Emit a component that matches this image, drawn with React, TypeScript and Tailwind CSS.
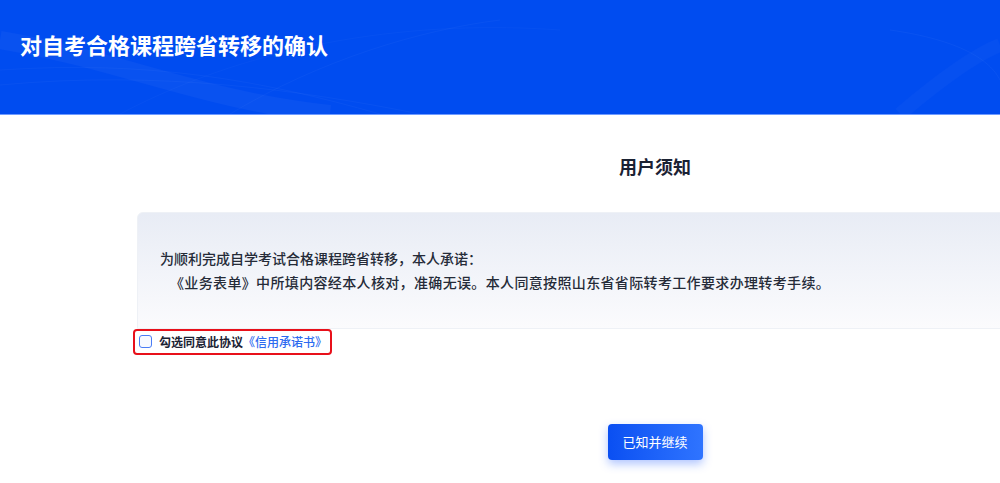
import React, { useState } from "react";

const cjk = "font-['PingFang_SC','Noto_Sans_CJK_SC','Noto_Sans',sans-serif]";

// 头部背景的波浪线装饰
const HeaderWaves: React.FC = () => (
  <svg
    className="absolute inset-0 h-full w-full"
    viewBox="0 0 1000 114"
    preserveAspectRatio="none"
    fill="none"
  >
    <path d="M0 40 C120 60 200 100 330 114" stroke="#ffffff" strokeOpacity="0.035" strokeWidth="18" />
    <path d="M0 70 C150 60 260 80 380 114" stroke="#ffffff" strokeOpacity="0.03" strokeWidth="1" />
    <path d="M0 85 C160 70 300 90 420 114" stroke="#ffffff" strokeOpacity="0.03" strokeWidth="1" />
    <path d="M120 114 C260 40 420 20 560 30" stroke="#ffffff" strokeOpacity="0.025" strokeWidth="1" />
    <path d="M230 114 C320 60 420 30 500 20" stroke="#ffffff" strokeOpacity="0.03" strokeWidth="1" />
    <path d="M890 30 C960 40 990 60 1000 80" stroke="#ffffff" strokeOpacity="0.035" strokeWidth="1" />
    <path d="M900 114 C940 80 975 55 1000 45" stroke="#ffffff" strokeOpacity="0.025" strokeWidth="14" />
  </svg>
);

const App: React.FC = () => {
  const [agreed, setAgreed] = useState(false);

  return (
    <div className={`h-[483px] w-[1000px] overflow-hidden bg-white ${cjk}`}>
      {/* 顶部标题栏 */}
      <div className="relative h-[115px] overflow-hidden border-b border-[#6f9bff] bg-[#004cf0]">
        <HeaderWaves />
        <h1 className="relative pl-[20px] pt-[30px] text-[22px] font-bold leading-[28px] text-white">
          对自考合格课程跨省转移的确认
        </h1>
      </div>

      {/* 内容区 */}
      <div className="ml-[137px] w-[1036px]">
        <h2 className="pt-[40px] text-center text-[18px] font-bold leading-[22px] text-[#1b2233]">
          用户须知
        </h2>

        <div className="mt-[35px] h-[117px] rounded-t-[6px] border border-[#eef1f6] bg-gradient-to-b from-[#e8ecf5] to-[#fbfbfd] pl-[22px] pt-[33px] text-[14px] font-medium leading-[24px] text-[#252b38]">
          <p>为顺利完成自学考试合格课程跨省转移，本人承诺：</p>
          <p className="pl-[10px] tracking-[0.35px]">
            《业务表单》中所填内容经本人核对，准确无误。本人同意按照山东省省际转考工作要求办理转考手续。
          </p>
        </div>

        <div className="-ml-[4px] -mt-[2px] inline-flex h-[26px] items-center gap-[7px] rounded-[4px] border-2 border-[#e8101a] pl-[4px] pr-[3px]">
          <button
            type="button"
            onClick={() => setAgreed(!agreed)}
            className={`flex h-[13px] w-[13px] items-center justify-center rounded-[3px] border-[1.5px] border-[#4a7cf5] ${
              agreed ? "bg-[#1a5cff]" : "bg-[#f7f9ff]"
            }`}
          >
            {agreed && (
              <svg viewBox="0 0 10 10" className="h-[8px] w-[8px]" fill="none">
                <path d="M1.5 5 L4 7.5 L8.5 2.5" stroke="#fff" strokeWidth="1.6" />
              </svg>
            )}
          </button>
          <span className="text-[12px] font-bold leading-none text-[#1b2233]">
            勾选同意此协议
            <span className="font-medium text-[#2d6bf0]">《信用承诺书》</span>
          </span>
        </div>

        <div className="mt-[69px] flex justify-center">
          <button
            type="button"
            className="h-[36px] w-[95px] rounded-[4px] bg-gradient-to-r from-[#0a4ff2] to-[#2f74ff] text-[13px] text-white shadow-[0_4px_10px_rgba(30,90,255,0.35)]"
          >
            已知并继续
          </button>
        </div>
      </div>
    </div>
  );
};

export default App;
